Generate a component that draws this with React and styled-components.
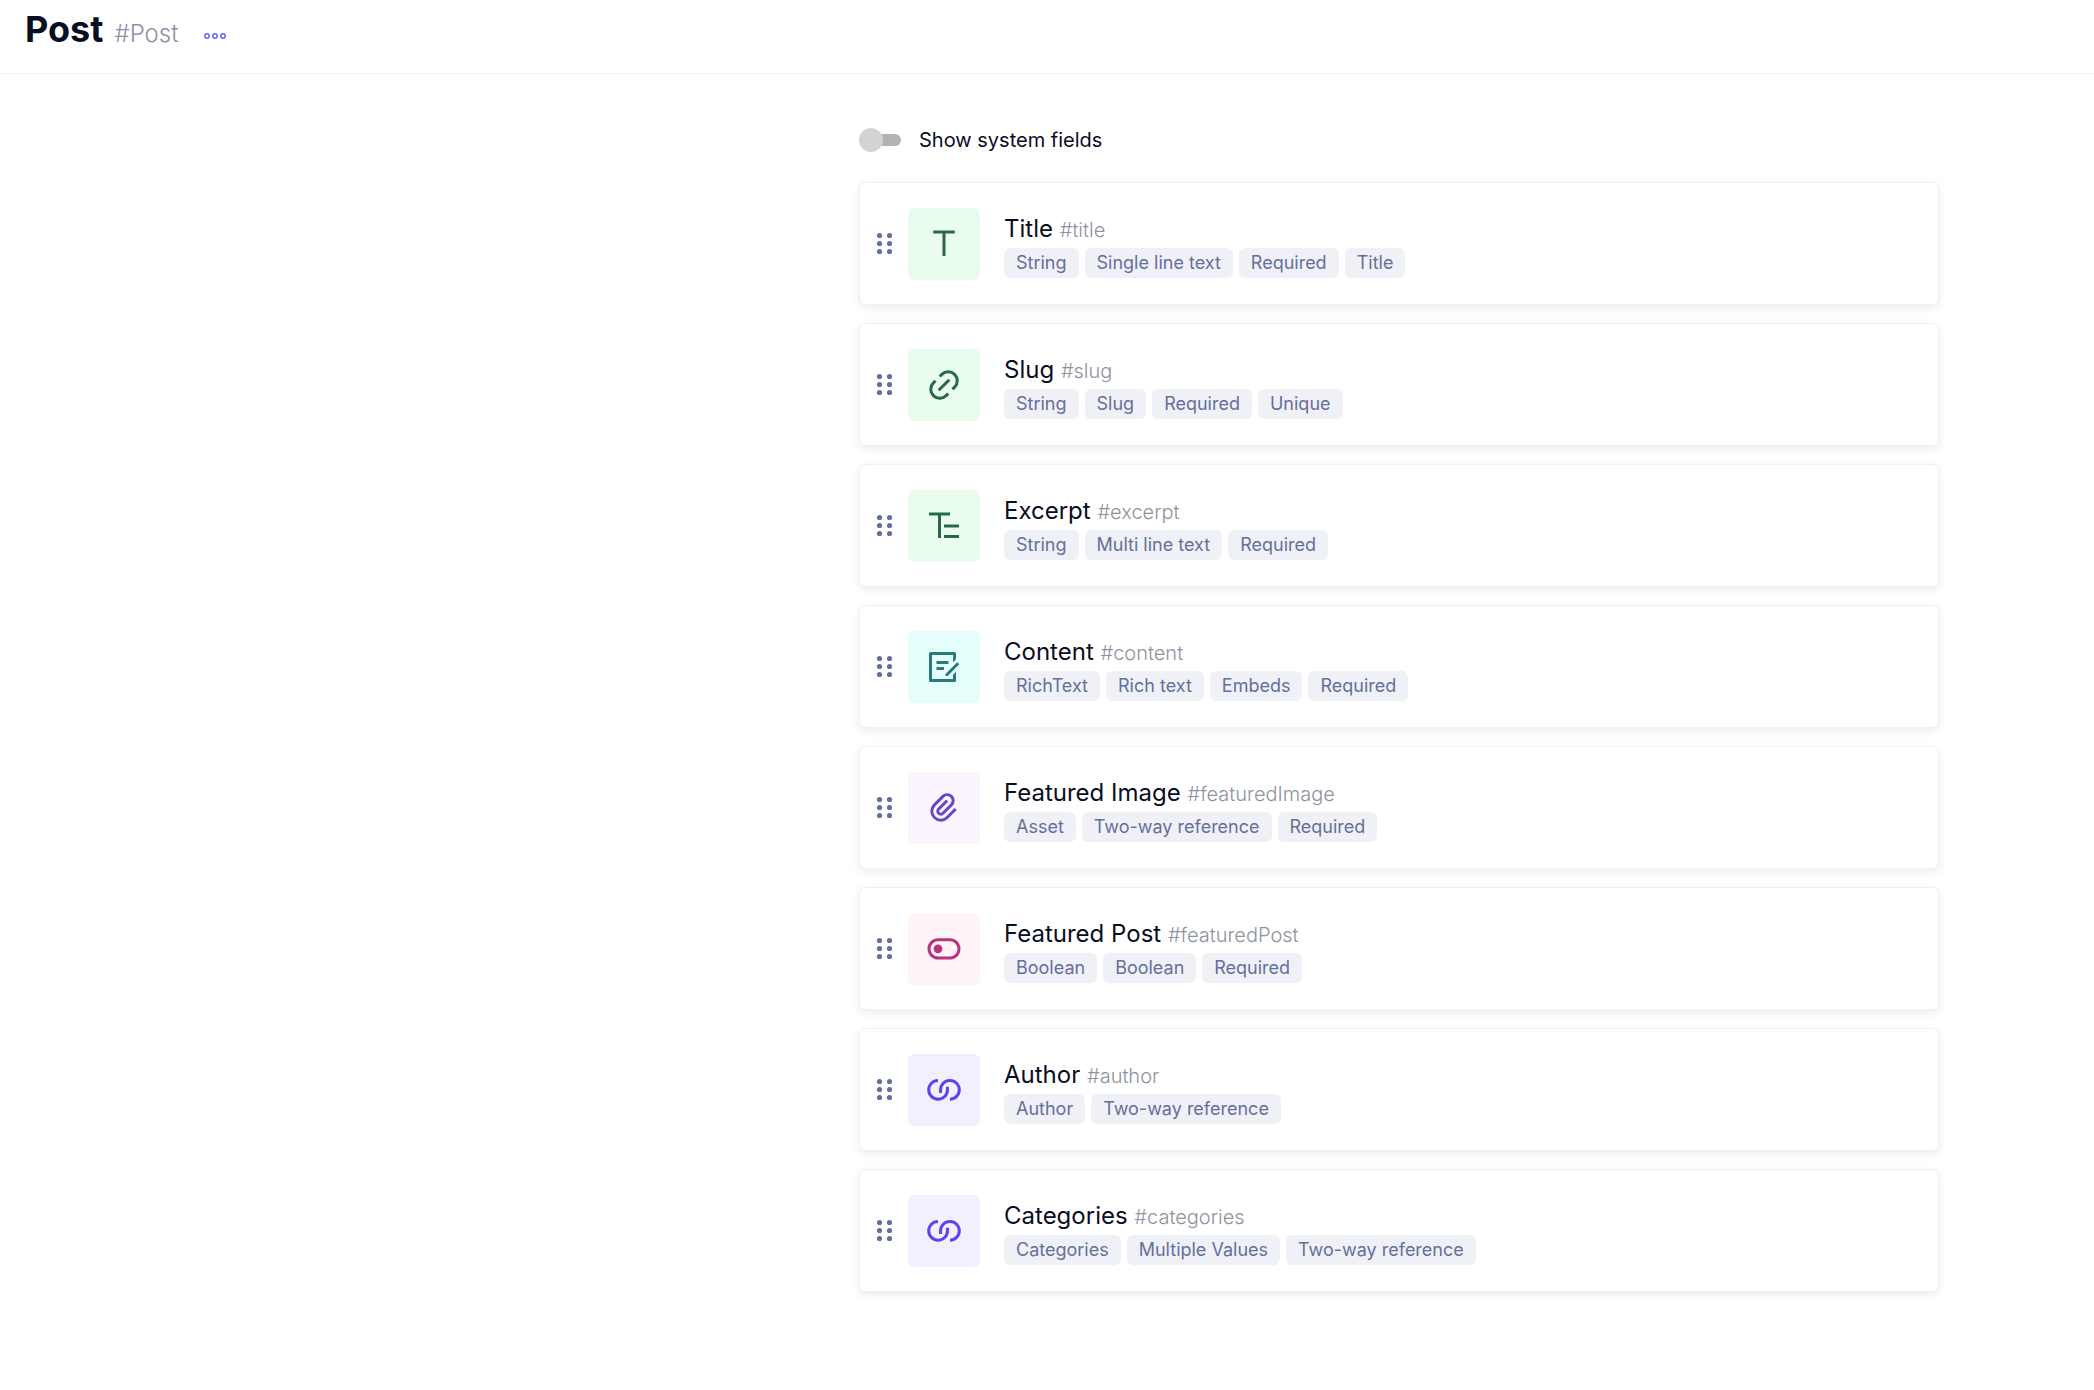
import React from 'react';
import styled, { createGlobalStyle } from 'styled-components';

const Global = createGlobalStyle`
  * { box-sizing: border-box; }
  body { margin: 0; background: #fff; color: #090e24; font-family: Inter, "Liberation Sans", sans-serif; }
`;

const Header = styled.header`
  display: flex;
  align-items: baseline;
  height: 74px;
  padding: 7px 25px 0;
  border-bottom: 1px solid #f0f0f3;
`;
const PageTitle = styled.h1`
  margin: 0 11px 0 0;
  font-size: 36px;
  line-height: 44px;
  font-weight: 700;
`;
const PageId = styled.span`
  color: #8d91a3;
  font-size: 24px;
  line-height: 36px;
  font-weight: 300;
`;
const MoreButton = styled.button`
  display: flex;
  align-items: center;
  margin: 0 0 0 25px;
  padding: 0;
  border: 0;
  background: none;
  color: #6663fd;
  cursor: pointer;
`;
const Main = styled.main`
  width: 1080px;
  max-width: calc(100% - 48px);
  margin: 48px 155px 0 auto;
  padding-bottom: 72px;
`;
const SwitchLabel = styled.label`
  display: flex;
  align-items: center;
  gap: 18px;
  height: 36px;
  margin-bottom: 24px;
  font-size: 20px;
  line-height: 30px;
`;
const Switch = styled.input`
  appearance: none;
  display: flex;
  align-items: center;
  width: 42px;
  height: 24px;
  margin: 0;
  cursor: pointer;
  &::before {
    content: "";
    z-index: 1;
    flex: none;
    width: 24px;
    height: 24px;
    border-radius: 50%;
    background: #d3d3d3;
  }
  &::after {
    content: "";
    flex: none;
    width: 24px;
    height: 12px;
    margin-left: -6px;
    border-radius: 6px;
    background: #b2b2b2;
  }
`;
const List = styled.ul`
  display: flex;
  flex-direction: column;
  gap: 18px;
  margin: 0;
  padding: 0;
  list-style: none;
`;
const Card = styled.li`
  display: flex;
  align-items: center;
  padding: 25px 16px 24px;
  border: 1px solid #f0f1f7;
  border-radius: 6px;
  background: #fff;
  box-shadow: 0 3px 9px rgba(0, 0, 0, 0.08);
`;
const DragHandle = styled.button`
  display: flex;
  margin-right: 15px;
  padding: 0;
  border: 0;
  background: none;
  color: #656f9c;
  cursor: grab;
`;
const Tile = styled.div`
  display: grid;
  place-items: center;
  width: 72px;
  height: 72px;
  margin-right: 24px;
  border-radius: 6px;
  color: ${(p) => p.$tone.ink};
  background: ${(p) => p.$tone.paper};
`;
const Name = styled.h2`
  margin: 0;
  font-size: 24px;
  line-height: 36px;
  font-weight: 400;
`;
const FieldId = styled.span`
  color: #8f929f;
  font-size: 20px;
  font-weight: 300;
`;
const Tags = styled.div`
  display: flex;
  flex-wrap: wrap;
  gap: 6px;
`;
const Tag = styled.span`
  padding: 3px 12px;
  border-radius: 6px;
  background: #f0f1f7;
  color: #656f9c;
  font-size: 18px;
  line-height: 24px;
`;

const tones = {
  green: { ink: '#28684a', paper: '#eafcee' },
  teal: { ink: '#2a7a7b', paper: '#e4fffb' },
  purple: { ink: '#6b46c1', paper: '#faf5ff' },
  pink: { ink: '#b83280', paper: '#fff5f7' },
  indigo: { ink: '#5f43ea', paper: '#f1f0ff' },
};

const Icon = ({ children }) => (
  <svg width="36" height="36" viewBox="0 0 24 24" fill="currentColor" aria-hidden="true">
    {children}
  </svg>
);
const icons = {
  text: <Icon><path d="M13 5v15h-2V5H4.800V3h14.400v2z" /></Icon>,
  link: <Icon><path d="M18.364 15.536L16.950 14.120l1.414-1.414a5 5 0 1 0-7.071-7.071L9.879 7.050 8.464 5.636 9.880 4.222a7 7 0 0 1 9.900 9.900l-1.415 1.414zm-2.828 2.828l-1.415 1.414a7 7 0 0 1-9.900-9.900l1.415-1.414L7.050 9.880l-1.414 1.414a5 5 0 1 0 7.071 7.071l1.414-1.414 1.415 1.414zm-.708-10.607l1.415 1.415-7.071 7.070-1.415-1.414 7.071-7.070z" /></Icon>,
  multiline: <Icon><path d="M2 3h14v2h-6v15H8V5H2zM12 11h10v2H12zM12 18h10v2H12z" /></Icon>,
  rich: <Icon><path d="M19 2a1 1 0 0 1 1 1v3.757l-2 2V4H4v16h14v-2.758l2-2V21a1 1 0 0 1-1 1H3a1 1 0 0 1-1-1V3a1 1 0 0 1 1-1zM20.778 8.808l1.414 1.414L14.414 18 13 17.998 13 16.586zM12 12v2H7v-2zM15 8v2H7V8z" /></Icon>,
  clip: <Icon><path d="M14.828 7.757l-5.656 5.657a1 1 0 1 0 1.414 1.414l5.657-5.656A3 3 0 1 0 12 4.929l-5.657 5.657a5 5 0 1 0 7.071 7.070L19.071 12l1.414 1.414-5.657 5.657a7 7 0 1 1-9.900-9.900l5.658-5.656a5 5 0 0 1 7.070 7.070L12 16.244A3 3 0 1 1 7.757 12l5.657-5.657 1.414 1.414z" /></Icon>,
  toggle: <Icon><rect x="2" y="5.800" width="20" height="12.200" rx="6.100" fill="none" stroke="currentColor" strokeWidth="2" /><circle cx="8" cy="11.900" r="2.900" /></Icon>,
  relation: <Icon><path fill="none" stroke="currentColor" strokeWidth="2" d="M8 5.700a6.200 6.200 0 0 0 0 12.400c3.600 0 6.300-2.700 6.300-6.300v-2M16 18.100a6.200 6.200 0 0 0 0-12.400c-3.600 0-6.300 2.700-6.300 6.300v2" /></Icon>,
};

const fields = [
  ['Title', 'title', 'text', 'green', ['String', 'Single line text', 'Required', 'Title']],
  ['Slug', 'slug', 'link', 'green', ['String', 'Slug', 'Required', 'Unique']],
  ['Excerpt', 'excerpt', 'multiline', 'green', ['String', 'Multi line text', 'Required']],
  ['Content', 'content', 'rich', 'teal', ['RichText', 'Rich text', 'Embeds', 'Required']],
  ['Featured Image', 'featuredImage', 'clip', 'purple', ['Asset', 'Two-way reference', 'Required']],
  ['Featured Post', 'featuredPost', 'toggle', 'pink', ['Boolean', 'Boolean', 'Required']],
  ['Author', 'author', 'relation', 'indigo', ['Author', 'Two-way reference']],
  ['Categories', 'categories', 'relation', 'indigo', ['Categories', 'Multiple Values', 'Two-way reference']],
];

function Field({ name, id, icon, tone, tags }) {
  return (
    <Card>
      <DragHandle aria-label={`Reorder ${name}`}>
        <svg width="17" height="24" viewBox="0 0 17 24" fill="currentColor" aria-hidden="true">
          {[3.5, 13.5].map((x) => [3.5, 11.5, 19.5].map((y) => <circle key={`${x}-${y}`} cx={x} cy={y} r="2.600" />))}
        </svg>
      </DragHandle>
      <Tile $tone={tones[tone]}>{icons[icon]}</Tile>
      <div>
        <Name>{name} <FieldId>#{id}</FieldId></Name>
        <Tags>{tags.map((tag, i) => <Tag key={i}>{tag}</Tag>)}</Tags>
      </div>
    </Card>
  );
}

export default function App() {
  return (
    <>
      <Global />
      <Header>
        <PageTitle>Post</PageTitle>
        <PageId>#Post</PageId>
        <MoreButton aria-label="More options">
          <svg width="26" height="10" viewBox="0 0 26 10" fill="none" stroke="currentColor" strokeWidth="1.500" aria-hidden="true">
            <circle cx="4" cy="4" r="2.200" /><circle cx="12" cy="4" r="2.200" /><circle cx="20" cy="4" r="2.200" />
          </svg>
        </MoreButton>
      </Header>
      <Main>
        <SwitchLabel htmlFor="system-fields">
          <Switch id="system-fields" type="checkbox" role="switch" />
          Show system fields
        </SwitchLabel>
        <List>
          {fields.map(([name, id, icon, tone, tags]) => (
            <Field key={id} name={name} id={id} icon={icon} tone={tone} tags={tags} />
          ))}
        </List>
      </Main>
    </>
  );
}
